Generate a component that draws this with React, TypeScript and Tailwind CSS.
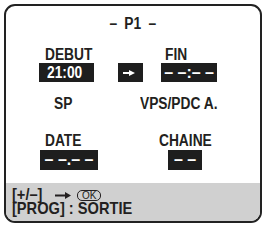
import React from "react";

const F = { fontFamily: '"Liberation Sans", Arial, sans-serif' };

function N({ children, c = false }: { children: React.ReactNode; c?: boolean }) {
  return (
    <span className={c ? "inline-block whitespace-pre scale-x-[0.86] origin-center" : "inline-block whitespace-pre scale-x-[0.86] origin-left"}>
      {children}
    </span>
  );
}

function Arrow({ w, h, color }: { w: number; h: number; color: string }) {
  return (
    <svg width={w} height={h} viewBox={`0 0 ${w} ${h}`}>
      <rect x={0} y={h / 2 - 1} width={w - 5} height={2} fill={color} />
      <polygon points={`${w - 6},0 ${w},${h / 2} ${w - 6},${h}`} fill={color} />
    </svg>
  );
}

export default function App() {
  return (
    <div className="w-[265px] h-[226px] bg-white overflow-hidden" style={F}>
      <div className="ml-[4px] mt-[4px] w-[258px] h-[219px] border-2 border-[#222] rounded-[11px] overflow-hidden flex flex-col text-[#231f20] font-bold">
        {/* title */}
        <div className="mt-[10px] h-[15px] text-[16px] leading-[15px] flex justify-center gap-[5px]">
          <N c>–</N>
          <N c>P1</N>
          <N c>–</N>
        </div>
        {/* row 1 */}
        <div className="mt-[16px] flex items-end">
          <div className="ml-[33px] flex flex-col">
            <div className="ml-[6px] h-[16px] text-[16px] leading-none"><N>DEBUT</N></div>
            <div className="w-[55px] h-[19px] bg-[#1e1e1e] text-white text-[16px] leading-none flex items-center pl-[8px]"><N>21:00</N></div>
          </div>
          <div className="ml-[18px] w-[25px] h-[19px] bg-[#1e1e1e] flex items-center pl-[5px]">
            <Arrow w={12} h={6} color="#ffffff" />
          </div>
          <div className="ml-[18px] flex flex-col">
            <div className="ml-[4px] h-[16px] text-[16px] leading-none"><N>FIN</N></div>
            <div className="w-[56px] h-[19px] bg-[#1e1e1e] text-white text-[16px] leading-none flex items-center justify-center whitespace-pre">– –:– –</div>
          </div>
        </div>
        {/* row 2 */}
        <div className="mt-[14px] h-[16px] flex text-[16px] leading-none">
          <span className="ml-[48px] w-[86px]"><N>SP</N></span>
          <span><N>VPS/PDC A.</N></span>
        </div>
        {/* row 3 */}
        <div className="mt-[21px] flex">
          <div className="ml-[34px] flex flex-col">
            <div className="ml-[5px] h-[17px] text-[16px] leading-none"><N>DATE</N></div>
            <div className="w-[58px] h-[20px] bg-[#1e1e1e] text-white text-[16px] leading-none flex items-center justify-center whitespace-pre">– –.– –</div>
          </div>
          <div className="ml-[61px] flex flex-col">
            <div className="h-[17px] text-[16px] leading-none"><N>CHAINE</N></div>
            <div className="ml-[9px] w-[34px] h-[20px] bg-[#1e1e1e] text-white text-[16px] leading-none flex items-center justify-center whitespace-pre">– –</div>
          </div>
        </div>
        {/* footer */}
        <div className="mt-[13px] flex-1 bg-[#d0d0d0] pl-[6px] pt-[5px] text-[17px]">
          <div className="h-[14px] leading-[14px] flex items-center">
            <span className="w-[43px]"><N>[+/–]</N></span>
            <span className="w-[22px] flex items-center"><Arrow w={16} h={7} color="#231f20" /></span>
            <span className="h-[11px] px-[4px] border border-[#231f20] rounded-[5px] text-[10px] font-normal leading-[9px] flex items-center">OK</span>
          </div>
          <div className="h-[14px] leading-[14px]"><N>[PROG] : SORTIE</N></div>
        </div>
      </div>
    </div>
  );
}
